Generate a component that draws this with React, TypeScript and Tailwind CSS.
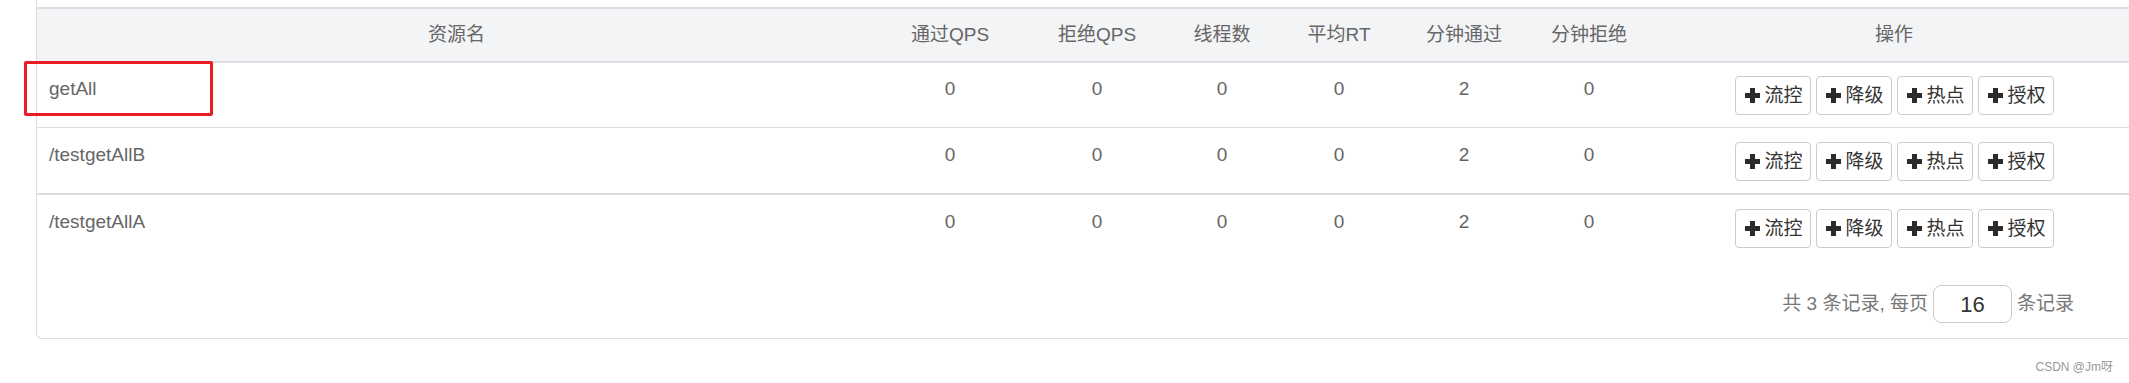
const columns = ["资源名", "通过QPS", "拒绝QPS", "线程数", "平均RT", "分钟通过", "分钟拒绝", "操作"];

type Row = {
  resource: string;
  passQps: number;
  blockQps: number;
  threads: number;
  avgRt: number;
  minutePass: number;
  minuteBlock: number;
};

const rows: Row[] = [
  { resource: "getAll", passQps: 0, blockQps: 0, threads: 0, avgRt: 0, minutePass: 2, minuteBlock: 0 },
  { resource: "/testgetAllB", passQps: 0, blockQps: 0, threads: 0, avgRt: 0, minutePass: 2, minuteBlock: 0 },
  { resource: "/testgetAllA", passQps: 0, blockQps: 0, threads: 0, avgRt: 0, minutePass: 2, minuteBlock: 0 },
];

const actions = ["流控", "降级", "热点", "授权"];

const gridCols = "grid grid-cols-[839px_148px_146px_104px_130px_120px_130px_480px]";

function PlusIcon() {
  return (
    <svg width="15" height="15" viewBox="0 0 15 15" className="shrink-0">
      <rect x="0" y="5" width="15" height="5" fill="#2b2b2b" />
      <rect x="5" y="0" width="5" height="15" fill="#2b2b2b" />
    </svg>
  );
}

function ActionButton({ label }: { label: string }) {
  return (
    <button className="h-[39px] w-[76px] flex items-center pl-[9px] gap-[5px] border border-[#cccccc] rounded-[4px] bg-white text-[19px] text-[#333] leading-none">
      <PlusIcon />
      <span>{label}</span>
    </button>
  );
}

export default function App() {
  return (
    <div
      className="relative w-[2129px] h-[383px] overflow-hidden bg-white pl-[36px]"
      style={{ fontFamily: '"Liberation Sans", "Noto Sans CJK SC", sans-serif' }}
    >
      <div className="w-[2099px] border-x border-b border-[#dddddd] rounded-b-[6px] pt-[7px]">
        {/* header */}
        <div className={`${gridCols} h-[56px] items-center border-y-2 border-[#dcdee2] bg-[#f3f4f6] text-[19px] text-[#666]`}>
          {columns.map((c) => (
            <div key={c} className="text-center">{c}</div>
          ))}
        </div>

        {rows.map((r, i) => (
          <div
            key={r.resource}
            className={`${gridCols} text-[19px] text-[#666] leading-[26px] ${i === 0 ? "border-b border-[#dddddd]" : i === 1 ? "border-b-2 border-[#dddddd]" : ""}`}
          >
            <div className={`pl-[12px] ${i === 0 ? "pt-[13px]" : "pt-[14px]"}`}>{r.resource}</div>
            <div className={`text-center ${i === 0 ? "pt-[13px]" : "pt-[14px]"}`}>{r.passQps}</div>
            <div className={`text-center ${i === 0 ? "pt-[13px]" : "pt-[14px]"}`}>{r.blockQps}</div>
            <div className={`text-center ${i === 0 ? "pt-[13px]" : "pt-[14px]"}`}>{r.threads}</div>
            <div className={`text-center ${i === 0 ? "pt-[13px]" : "pt-[14px]"}`}>{r.avgRt}</div>
            <div className={`text-center ${i === 0 ? "pt-[13px]" : "pt-[14px]"}`}>{r.minutePass}</div>
            <div className={`text-center ${i === 0 ? "pt-[13px]" : "pt-[14px]"}`}>{r.minuteBlock}</div>
            <div className={`flex justify-center gap-[5px] pb-[12px] ${i === 0 ? "pt-[13px]" : "pt-[14px]"}`}>
              {actions.map((a) => (
                <ActionButton key={a} label={a} />
              ))}
            </div>
          </div>
        ))}

        {/* pagination */}
        <div className="flex justify-end items-center pt-[25px] pb-[15px] pr-[60px] text-[19px] text-[#777]">
          <span>共 3 条记录, 每页</span>
          <div className="mx-[5px] h-[38px] w-[79px] flex items-center justify-center border border-[#cccccc] rounded-[8px] text-[22px] text-[#333]">
            16
          </div>
          <span>条记录</span>
        </div>
      </div>

      <div className="flex justify-end pr-[16px] mt-[20px] text-[12px] leading-[16px] text-[#999]">
        CSDN @Jm呀
      </div>

      {/* annotation box */}
      <div className="absolute left-[24px] top-[61px] w-[189px] h-[55px] border-[3px] border-[#ec1c24] rounded-[2px]" />
    </div>
  );
}
